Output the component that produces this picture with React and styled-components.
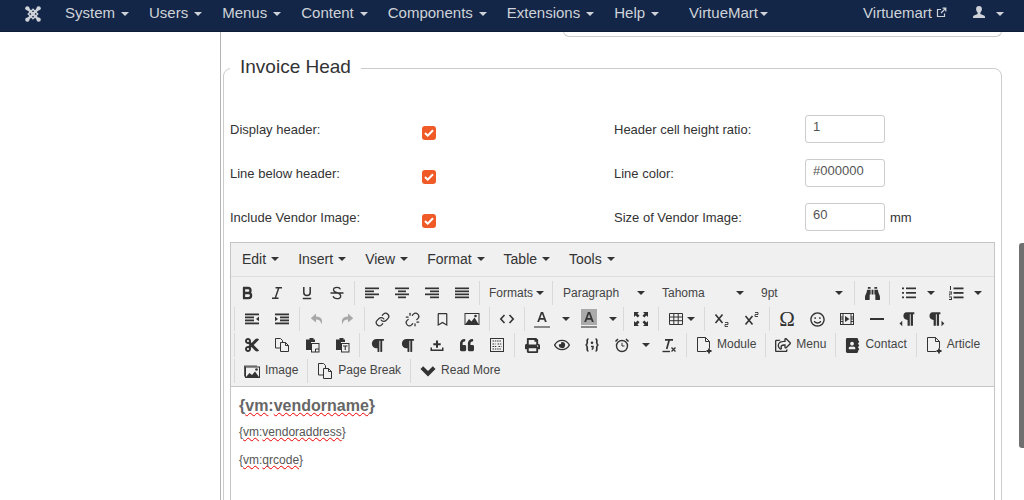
import React from "react";
import styled, { createGlobalStyle } from "styled-components";
import {
  FaCut, FaBinoculars, FaPrint, FaRegEye, FaQuoteLeft, FaRegSmile,
  FaAddressBook, FaRegShareSquare, FaParagraph, FaRegBookmark,
} from "react-icons/fa";
import { Link as LinkIco, Unlink as UnlinkIco } from "lucide-react";

const Global = createGlobalStyle`
  html, body { margin: 0; padding: 0; background: #fff; }
  body { font-family: "Liberation Sans", Arial, sans-serif; color: #333; overflow: hidden; }
  * { box-sizing: border-box; }
`;

const Page = styled.div`
  position: relative;
  height: 500px;
  width: 1024px;
  overflow: hidden;
  display: flex;
  flex-direction: column;
`;

const Navbar = styled.nav`
  flex: none;
  height: 32px;
  background: #132647;
  border-bottom: 1px solid #0d1c36;
  display: flex;
  align-items: center;
  padding: 0 10px 6px 0;
  color: #cfd3d9;
  font-size: 15px;
  z-index: 2;
`;

const Brand = styled.div`
  width: 55px;
  display: flex;
  justify-content: flex-end;
  padding: 2px 14px 0 0;
  color: #cfd3d9;
  svg { display: block; }
`;

const NavItem = styled.div`
  display: flex;
  align-items: center;
  padding: 0 10px;
  margin-left: ${(p) => p.$shift || 0}px;
`;

const NavCaret = styled.span`
  width: 0;
  height: 0;
  margin-left: ${(p) => p.$ml ?? 6}px;
  margin-top: 3px;
  border-top: 4px solid #cfd3d9;
  border-left: 4px solid transparent;
  border-right: 4px solid transparent;
`;

const NavRight = styled.div`
  margin-left: auto;
  display: flex;
  align-items: center;
`;

const NavIconGap = styled.span`
  display: inline-flex;
  margin-left: 4px;
`;

const Main = styled.div`
  flex: 1;
  display: flex;
  min-height: 0;
`;

const Sidebar = styled.aside`
  flex: none;
  width: 221px;
  border-right: 1px solid #b5b5b5;
`;

const Content = styled.main`
  flex: none;
  width: 779px;
  margin-left: 2px;
`;

const PrevCard = styled.div`
  height: 6px;
  margin-top: -1px;
  margin-left: 340px;
  border: 1px solid #ccc;
  border-top: none;
  border-radius: 0 0 8px 8px;
`;

const Fieldset = styled.fieldset`
  margin: 16px 0 0;
  padding: 32px 6px 0;
  border: 1px solid #ccc;
  border-radius: 8px;
  min-width: 0;
  height: 520px;
`;

const Legend = styled.legend`
  padding: 0 10px 2px;
  font-size: 19px;
  line-height: 28px;
  color: #333;
`;

const FormGrid = styled.div`
  display: grid;
  grid-template-columns: 192px 192px 191px 1fr;
  grid-auto-rows: 28px;
  row-gap: 16px;
  margin-bottom: 11px;
`;

const Label = styled.label`
  font-size: 13px;
  line-height: 30px;
  color: #333;
`;

const Check = styled.span`
  width: 14px;
  height: 14px;
  margin-top: 11px;
  border-radius: 3px;
  background: #ef5a26;
  display: flex;
  align-items: center;
  justify-content: center;
`;

const InputCell = styled.div`
  display: flex;
  align-items: center;
  gap: 5px;
  font-size: 13px;
`;

const Input = styled.input`
  width: 80px;
  height: 28px;
  border: 1px solid #ccc;
  border-radius: 3px;
  padding: 0 7px 5px;
  font: 13px "Liberation Sans", Arial, sans-serif;
  color: #555;
  background: #fff;
  outline: none;
`;

const Editor = styled.div`
  border: 1px solid #c5c5c5;
  width: 765px;
  height: 320px;
  background: #fff;
`;

const Menubar = styled.div`
  height: 34px;
  background: #f0f0f0;
  border-bottom: 1px solid #dedede;
  display: flex;
  align-items: center;
  padding: 0 0 1px 2px;
  font-size: 14px;
  color: #333;
`;

const MenuItem = styled.div`
  display: flex;
  align-items: center;
  padding: 0 10px 0 9px;
`;

const Caret = styled.span`
  flex: none;
  width: 0;
  height: 0;
  margin-left: ${(p) => p.$ml ?? 5}px;
  border-top: 4px solid #333;
  border-left: 4px solid transparent;
  border-right: 4px solid transparent;
`;

const Toolbar = styled.div`
  background: #f0f0f0;
  border-bottom: 1px solid #c5c5c5;
  padding: 4px 0 1px 1px;
`;

const Row = styled.div`
  display: flex;
  height: 24px;
  margin-bottom: 2px;
`;

const Group = styled.div`
  display: flex;
  align-items: center;
  height: 24px;
  ${(p) =>
    p.$first
      ? ""
      : `margin-left: 2px; border-left: 1px solid #d9d9d9; padding-left: ${p.$pad ?? 2}px;`}
`;

const Btn = styled.div`
  flex: none;
  width: 30px;
  height: 24px;
  display: flex;
  align-items: center;
  justify-content: center;
  color: ${(p) => (p.$muted ? "#a8a8a8" : "#333")};
  svg { display: block; flex: none; }
`;

const Split = styled.div`
  flex: none;
  width: ${(p) => p.$w || 47}px;
  height: 24px;
  display: flex;
  align-items: center;
`;

const TextBtn = styled.div`
  flex: none;
  height: 24px;
  display: flex;
  align-items: center;
  gap: 5px;
  padding: 0 7px;
  color: #333;
  font-size: 12px;
  svg { display: block; flex: none; }
`;

const BtnLabel = styled.span`
  margin-top: -2px;
  color: #444;
`;

const MenuBtn = styled.div`
  flex: none;
  height: 24px;
  display: flex;
  align-items: center;
  font-size: 12px;
  color: #444;
  padding: 0 6px 0 7px;
`;

const ListBox = styled.div`
  flex: none;
  width: 99px;
  height: 24px;
  display: flex;
  align-items: center;
  justify-content: space-between;
  font-size: 12px;
  color: #444;
  padding: 0 9px 0 8px;
`;

const Omega = styled.span`
  font-family: "Liberation Serif", serif;
  font-size: 21px;
  line-height: 24px;
  color: #333;
`;

const Body = styled.div`
  padding: 9px 8px;
  color: #666;
`;

const Heading = styled.h2`
  margin: 0 0 10px;
  font-size: 16px;
  line-height: 19px;
  font-weight: bold;
  color: #666;
`;

const Para = styled.p`
  margin: 0 0 14px;
  font-size: 12px;
  line-height: 14px;
  color: #555;
`;

const Spell = styled.span`
  text-decoration: underline wavy #e00;
  text-decoration-thickness: 1px;
  text-underline-offset: 1px;
  text-decoration-skip-ink: none;
`;

const ScrollThumb = styled.div`
  position: absolute;
  right: 0;
  top: 243px;
  width: 5px;
  height: 205px;
  background: #707070;
  border-radius: 3px 0 0 3px;
`;

const S = ({ children, sw = 1.5, size = 16 }) => (
  <svg width={size} height={size} viewBox="0 0 16 16" fill="none" stroke="currentColor" strokeWidth={sw}>
    {children}
  </svg>
);
const F = ({ children, size = 16 }) => (
  <svg width={size} height={size} viewBox="0 0 16 16" fill="currentColor">
    {children}
  </svg>
);

const Bars = ({ rows }) => (
  <F>
    {rows.map(([x, y, w, h = 1.7], i) => (
      <rect key={i} x={x} y={y} width={w} height={h} />
    ))}
  </F>
);

const Bold = () => (
  <S sw={2.3}><path d="M5 2.5v11M4 3h5a2.4 2.4 0 0 1 0 5H5M5 8h4.5a2.6 2.6 0 0 1 0 5.2H4" /></S>
);
const Italic = () => (
  <S sw={1.4}><path d="M6.5 2.8h6.5M3 13.2h6.5M9.8 2.8 6.2 13.2" /></S>
);
const Underline = () => (
  <S sw={1.5}><path d="M4.8 2v5.6c0 2 1.3 3 3.2 3s3.2-1 3.2-3V2M3.8 13.5h8.4" /></S>
);
const Strike = () => (
  <S sw={1.3}><path d="M11.5 4.4C11 3 9.8 2.4 8 2.4c-2.2 0-3.5 1-3.5 2.5 0 3.2 7.2 2.4 7.2 6 0 1.6-1.5 2.7-3.7 2.7-2 0-3.4-.8-3.9-2.3M1.5 8h13" /></S>
);
const Undo = () => (
  <F><path d="M7 2.5 1.8 7.2 7 11.5V8.6c2.6 0 4.5.7 5.500 4.700 1.500-3.800.4-7.600-5.500-7.800z" /></F>
);
const Redo = () => (
  <F><path d="M9 2.5l5.2 4.7L9 11.5V8.6c-2.6 0-4.500.7-5.500 4.700C2 9.500 3.100 5.700 9 5.500z" /></F>
);
const ImageIco = ({ framed }) => (
  <svg width="16" height="16" viewBox="0 0 16 16">
    {framed && <path d="M0 2.500h13v1H1v10H0z" fill="#555" />}
    <rect x={framed ? 1.5 : 1} y={framed ? 4 : 2.5} width="14" height={framed ? 10.5 : 11} fill="none" stroke="#333" />
    <path d={framed ? "M2 14l3.500-4 2.500 2 3-3.500 4 5.500z" : "M1.500 13l3.500-5 2.500 2.500 3-4 4 6.500z"} fill="#333" />
    <circle cx={framed ? 12.5 : 11.5} cy={framed ? 6.5 : 5} r="1.300" fill="#333" />
  </svg>
);
const Code = () => (
  <S sw={1.6}><path d="M5.500 4 1.800 8l3.700 4M10.500 4l3.700 4-3.700 4" /></S>
);
const Fullscreen = () => (
  <F>
    <path d="M1 1h5L4.400 2.600 6.500 4.700 4.700 6.500 2.600 4.400 1 6zM15 1v5l-1.600-1.600-2.100 2.100-1.800-1.800 2.100-2.100L10 1zM1 15v-5l1.600 1.600 2.100-2.100 1.800 1.800-2.100 2.100L6 15zM15 15h-5l1.600-1.600-2.100-2.100 1.800-1.800 2.100 2.100L15 10z" />
  </F>
);
const TableIco = () => (
  <S sw={1}><path d="M1.500 2.500h13v11h-13zM1.500 6h13M1.500 9.700h13M5.800 2.500v11M10.200 2.500v11" /></S>
);
const Sub = () => (
  <svg width="16" height="16" viewBox="0 0 16 16" fill="none" stroke="currentColor">
    <path d="M1.500 3.500l7 8.500M8.500 3.500l-7 8.500" strokeWidth="1.600" />
    <path d="M11 11.500h3v2h-3v2h3" strokeWidth=".9" />
  </svg>
);
const Sup = () => (
  <svg width="16" height="16" viewBox="0 0 16 16" fill="none" stroke="currentColor">
    <path d="M1.500 5l7 8.500M8.500 5l-7 8.500" strokeWidth="1.600" />
    <path d="M11 1.500h3v2h-3v2h3" strokeWidth=".9" />
  </svg>
);
const Media = () => (
  <svg width="16" height="16" viewBox="0 0 16 16">
    <rect x="1.500" y="2.500" width="13" height="11" fill="none" stroke="#333" />
    <path d="M4 3v10M12 3v10M1.500 6h2.500M1.500 8h2.500M1.500 10.500h2.500M12 6h2.500M12 8h2.500M12 10.500h2.500" stroke="#333" />
    <path d="M6 5l4.500 3L6 11z" fill="#333" />
  </svg>
);
const Hr = () => <Bars rows={[[1, 7, 14, 2]]} />;
const Ltr = () => (
  <F size={18}>
    <path d="M7.500 2h7v1.800h-1.200V14h-2V3.800h-.8V14h-2V8.800C6.200 8.800 4.800 7.500 4.800 5.400S6 2 7.500 2z" />
    <path d="M3.800 9.500v5L1.300 12z" />
  </F>
);
const Rtl = () => (
  <F size={18}>
    <path d="M4 2h7v1.800H9.800V14h-2V3.800H7V14H5V8.800C2.700 8.800 1.300 7.500 1.300 5.400S2.500 2 4 2z" />
    <path d="M12 9.500v5l2.500-2.500z" />
  </F>
);
const Copy = ({ big }) => (
  <svg width="16" height={big ? 18 : 16} viewBox={big ? "0 0 16 18" : "0 0 16 16"} fill="#f0f0f0" stroke="#333">
    <path d={big ? "M1.500 1.500h5l2 2v9.500h-7z" : "M1.500 1.500h5l2 2v7.500h-7z"} />
    <path d={big ? "M6.500 6.500h5l3 3v7h-8z" : "M6.500 5.500h5l3 3v6h-8z"} />
    <path d={big ? "M11.500 6.500v3h3" : "M11.500 5.500v3h3"} fill="none" />
  </svg>
);
const Paste = ({ text }) => (
  <svg width="16" height="16" viewBox="0 0 16 16">
    <path d="M4 2.500h1.500V1h4v1.500H11V5H7v8H2V2.500z" fill="#333" />
    <rect x="7.500" y="6.500" width="7.500" height="8.500" fill="#f0f0f0" stroke="#333" />
    {text ? <path d="M9 8.500h4.500v1H11.800v3.500h-1.100V9.500H9z" fill="#333" /> : <path d="M11.500 15v-3H15" fill="none" stroke="#333" />}
  </svg>
);
const Tray = () => (
  <F>
    <path d="M1.500 10.500h1.500v2h10v-2h1.500V14h-13zM7 3.500h2v2.700h2.700v2H9v2.500H7V8.200H4.300v-2H7z" />
  </F>
);
const TemplateIco = () => (
  <svg width="16" height="16" viewBox="0 0 16 16" fill="none" stroke="#333">
    <rect x="1.500" y="1.500" width="13" height="13" />
    <path d="M3.500 4h9M3.500 7h3M8.500 7h4M3.500 9.500h4M9.500 9.500h3M3.500 12h9" strokeDasharray="1.500 .8" />
  </svg>
);
const Braces = () => (
  <svg width="16" height="16" viewBox="0 0 16 16" fill="none" stroke="#333" strokeWidth="1.700">
    <path d="M4.500 2C2.800 2 3.300 4 3.200 6 3 7.500 2.500 8 1.500 8c1 0 1.500.5 1.700 2 .1 2-.4 4 1.300 4M11.500 2c1.700 0 1.200 2 1.300 4 .2 1.500.7 2 1.700 2-1 0-1.500.5-1.700 2-.1 2 .4 4-1.300 4" />
    <circle cx="8" cy="5.800" r="1.300" fill="#333" stroke="none" />
    <path d="M7 9.500h2v1.300c0 1-.5 1.500-1.300 1.700" strokeWidth="1.500" />
  </svg>
);
const Alarm = () => (
  <svg width="16" height="16" viewBox="0 0 16 16" fill="none" stroke="#333">
    <circle cx="8" cy="9" r="5.500" strokeWidth="1.400" />
    <path d="M8 5.800V9h2.500" />
    <path d="M1.500 4.500 4 2M14.500 4.500 12 2" strokeWidth="1.500" />
  </svg>
);
const ClearFmt = () => (
  <svg width="16" height="16" viewBox="0 0 16 16" fill="none" stroke="#333">
    <path d="M4 2.800h8M8.300 2.800 5.700 12" strokeWidth="1.700" />
    <path d="M1.500 14.500h7.500" strokeWidth="1.400" />
    <path d="M10.500 10.500l4 4M14.500 10.500l-4 4" strokeWidth="1.300" />
  </svg>
);
const DocPlus = () => (
  <svg width="16" height="18" viewBox="0 0 16 18" fill="none" stroke="#333">
    <path d="M1.500 1.500h8l4 4v7M1.500 1.500v14h8.500" />
    <path d="M9.500 1.500v4h4" />
    <path d="M13 12.500v5M10.500 15h5" strokeWidth="1.800" />
  </svg>
);
const HeavyChevron = () => (
  <F><path d="M0.500 6 3.200 3.300 8 8.100l4.800-4.800L15.500 6 8 13.500z" /></F>
);
const Joomla = () => (
  <svg width="16" height="16" viewBox="0 0 17 17" fill="none" stroke="currentColor">
    <path d="M2.500 2.500 14.500 14.500M14.500 2.500 2.500 14.500" strokeWidth="2.600" />
    <path d="M8.500 3.500l5 5-5 5-5-5z" strokeWidth="1.500" />
    <g fill="currentColor" stroke="none">
      <circle cx="2.500" cy="2.500" r="2.300" /><circle cx="14.500" cy="2.500" r="2.300" />
      <circle cx="2.500" cy="14.500" r="2.300" /><circle cx="14.500" cy="14.500" r="2.300" />
    </g>
  </svg>
);
const ExternalIco = () => (
  <svg width="11" height="11" viewBox="0 0 11 11" fill="none" stroke="currentColor" strokeWidth="1.200">
    <path d="M8.500 6.500v3h-7v-7h3.500M5 6l4.500-4.500M6.500 1.200h3.300v3.300" />
  </svg>
);
const UserIco = () => (
  <svg width="12" height="13" viewBox="0 0 12 13" fill="currentColor">
    <path d="M6 0c1.900 0 2.900 1.300 2.900 3.100 0 1.500-.7 2.800-1.500 3.500v1.300l3.600 1.500c.6.300 1 .8 1 1.600v1H0v-1c0-.8.400-1.300 1-1.600l3.600-1.500V6.600c-.8-.7-1.500-2-1.500-3.500C3.100 1.300 4.100 0 6 0z" />
  </svg>
);
const WhiteTick = () => (
  <svg width="10" height="8" viewBox="0 0 10 8" fill="none" stroke="#fff" strokeWidth="2">
    <path d="M1 4l2.700 2.700L9 1.200" />
  </svg>
);
const ColorA = ({ bg }) => (
  <svg width="16" height="20" viewBox="0 0 16 20">
    {bg && <rect x="0" y="0" width="16" height="16" fill="#aaa" />}
    <rect x="0" y="17" width="16" height="2" fill="#888" />
    <path d="M6.900 3h2.200l3.700 10h-1.900l-.8-2.300H5.900l-.8 2.300H3.200zM6.400 9h3.200L8 4.700z" fill="#333" />
  </svg>
);

const Ico = {
  alignL: <Bars rows={[[1, 2.5, 14], [1, 5.5, 9], [1, 8.5, 14], [1, 11.5, 9]]} />,
  alignC: <Bars rows={[[1, 2.5, 14], [4, 5.5, 8], [1, 8.5, 14], [4, 11.5, 8]]} />,
  alignR: <Bars rows={[[1, 2.5, 14], [6, 5.5, 9], [1, 8.5, 14], [6, 11.5, 9]]} />,
  justify: <Bars rows={[[1, 2.5, 14], [1, 5.5, 14], [1, 8.5, 14], [1, 11.5, 14]]} />,
  list: (
    <Bars rows={[[1, 2.5, 2], [1, 7, 2], [1, 11.5, 2], [5, 2.5, 10], [5, 7, 10], [5, 11.5, 10]]} />
  ),
  numlist: (
    <F>
      <rect x="5.500" y="2.500" width="10" height="1.800" /><rect x="5.500" y="7" width="10" height="1.800" /><rect x="5.500" y="11.500" width="10" height="1.800" />
      <rect x="2" y="1" width="1" height="4" /><rect x="1" y="6.500" width="3" height="1" /><rect x="3" y="7.500" width="1" height="1" /><rect x="1" y="8.500" width="3" height="1" /><rect x="1" y="9.500" width="1" height="1" /><rect x="1" y="11.500" width="3" height="1" /><rect x="3" y="12.500" width="1" height="2" /><rect x="1" y="14" width="3" height="1" />
    </F>
  ),
  outdent: (
    <F>
      <rect x="1" y="2.500" width="14" height="1.800" /><rect x="1" y="5.500" width="9" height="1.800" /><rect x="1" y="8.500" width="9" height="1.800" /><rect x="1" y="11.500" width="14" height="1.800" />
      <path d="M15 5.500v4.800L12 8z" />
    </F>
  ),
  indent: (
    <F>
      <rect x="1" y="2.500" width="14" height="1.800" /><rect x="6" y="5.500" width="9" height="1.800" /><rect x="6" y="8.500" width="9" height="1.800" /><rect x="1" y="11.500" width="14" height="1.800" />
      <path d="M1 5.500v4.800L4 8z" />
    </F>
  ),
};

const Menu = ["Edit", "Insert", "View", "Format", "Table", "Tools"];

const CheckRow = ({ left, right, value, unit }) => (
  <>
    <Label>{left}</Label>
    <Check><WhiteTick /></Check>
    <Label>{right}</Label>
    <InputCell>
      <Input readOnly value={value} />
      {unit}
    </InputCell>
  </>
);

const T = ({ children, muted }) => <Btn $muted={muted}>{children}</Btn>;

export default function App() {
  return (
    <Page>
      <Global />
      <Navbar>
        <Brand><Joomla /></Brand>
        {["System", "Users", "Menus", "Content", "Components", "Extensions", "Help"].map((n) => (
          <NavItem key={n}>{n}<NavCaret /></NavItem>
        ))}
        <NavItem $shift={10}>VirtueMart<NavCaret $ml={2} /></NavItem>
        <NavRight>
          <NavItem>Virtuemart<NavIconGap><ExternalIco /></NavIconGap></NavItem>
          <NavItem $shift={6}><UserIco /><NavCaret $ml={11} /></NavItem>
        </NavRight>
      </Navbar>
      <Main>
        <Sidebar />
        <Content>
          <PrevCard />
          <Fieldset>
            <Legend>Invoice Head</Legend>
            <FormGrid>
              <CheckRow left="Display header:" right="Header cell height ratio:" value="1" />
              <CheckRow left="Line below header:" right="Line color:" value="#000000" />
              <CheckRow left="Include Vendor Image:" right="Size of Vendor Image:" value="60" unit="mm" />
            </FormGrid>
            <Editor>
              <Menubar>
                {Menu.map((m) => (
                  <MenuItem key={m}>{m}<Caret /></MenuItem>
                ))}
              </Menubar>
              <Toolbar>
                <Row>
                  <Group $first>
                    <T><Bold /></T><T><Italic /></T><T><Underline /></T><T><Strike /></T>
                  </Group>
                  <Group>
                    <T>{Ico.alignL}</T><T>{Ico.alignC}</T><T>{Ico.alignR}</T><T>{Ico.justify}</T>
                  </Group>
                  <Group>
                    <MenuBtn>Formats<Caret $ml={3} /></MenuBtn>
                  </Group>
                  <Group>
                    <ListBox>Paragraph<Caret /></ListBox>
                    <ListBox>Tahoma<Caret /></ListBox>
                    <ListBox>9pt<Caret /></ListBox>
                  </Group>
                  <Group>
                    <T><FaBinoculars size={15} /></T>
                  </Group>
                  <Group $pad={4}>
                    <Split><T>{Ico.list}</T><Caret $ml={3} /></Split>
                    <Split><T>{Ico.numlist}</T><Caret $ml={3} /></Split>
                  </Group>
                </Row>
                <Row>
                  <Group>
                    <T>{Ico.outdent}</T><T>{Ico.indent}</T>
                  </Group>
                  <Group>
                    <T muted><Undo /></T><T muted><Redo /></T>
                  </Group>
                  <Group>
                    <T><LinkIco size={15} strokeWidth={2} /></T><T><UnlinkIco size={15} strokeWidth={2} /></T><T><FaRegBookmark size={13} /></T><T><ImageIco /></T>
                  </Group>
                  <Group>
                    <T><Code /></T>
                  </Group>
                  <Group>
                    <Split><T><ColorA /></T><Caret /></Split>
                    <Split><T><ColorA bg /></T><Caret /></Split>
                  </Group>
                  <Group>
                    <T><Fullscreen /></T>
                  </Group>
                  <Group>
                    <Split $w={41}><T><TableIco /></T><Caret $ml={-4} /></Split>
                  </Group>
                  <Group>
                    <T><Sub /></T><T><Sup /></T>
                  </Group>
                  <Group>
                    <T><Omega>Ω</Omega></T><T><FaRegSmile size={15} /></T><T><Media /></T><T><Hr /></T><T><Ltr /></T><T><Rtl /></T>
                  </Group>
                </Row>
                <Row>
                  <Group>
                    <T><FaCut size={16} /></T><T><Copy /></T><T><Paste /></T><T><Paste text /></T>
                  </Group>
                  <Group>
                    <T><FaParagraph size={15} /></T><T><FaParagraph size={15} /></T><T><Tray /></T><T><FaQuoteLeft size={14} /></T><T><TemplateIco /></T>
                  </Group>
                  <Group>
                    <T><FaPrint size={15} /></T><T><FaRegEye size={16} /></T><T><Braces /></T>
                    <Split><T><Alarm /></T><Caret /></Split>
                    <T><ClearFmt /></T>
                  </Group>
                  <Group>
                    <TextBtn><DocPlus /><BtnLabel>Module</BtnLabel></TextBtn>
                  </Group>
                  <Group>
                    <TextBtn><FaRegShareSquare size={16} /><BtnLabel>Menu</BtnLabel></TextBtn>
                  </Group>
                  <Group>
                    <TextBtn><FaAddressBook size={15} /><BtnLabel>Contact</BtnLabel></TextBtn>
                  </Group>
                  <Group>
                    <TextBtn><DocPlus /><BtnLabel>Article</BtnLabel></TextBtn>
                  </Group>
                </Row>
                <Row>
                  <Group>
                    <TextBtn><ImageIco framed /><BtnLabel>Image</BtnLabel></TextBtn>
                  </Group>
                  <Group>
                    <TextBtn><Copy big /><BtnLabel>Page Break</BtnLabel></TextBtn>
                  </Group>
                  <Group>
                    <TextBtn><HeavyChevron /><BtnLabel>Read More</BtnLabel></TextBtn>
                  </Group>
                </Row>
              </Toolbar>
              <Body>
                <Heading>{"{"}<Spell>vm</Spell>:<Spell>vendorname</Spell>{"}"}</Heading>
                <Para>{"{"}<Spell>vm</Spell>:<Spell>vendoraddress</Spell>{"}"}</Para>
                <Para>{"{"}<Spell>vm</Spell>:<Spell>qrcode</Spell>{"}"}</Para>
              </Body>
            </Editor>
          </Fieldset>
        </Content>
      </Main>
      <ScrollThumb />
    </Page>
  );
}
